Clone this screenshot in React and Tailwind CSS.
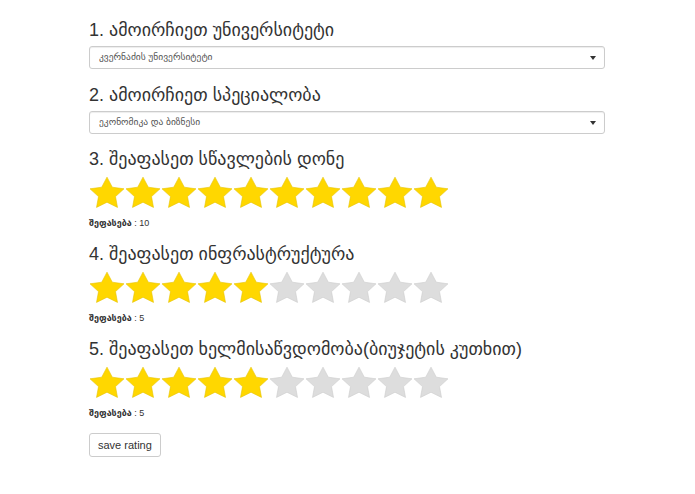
import { useState } from 'react';

const font = { fontFamily: '"Liberation Sans", "DejaVu Sans", sans-serif' };

function Star({ on }) {
  return (
    <svg viewBox="0 0 36 34" preserveAspectRatio="none" className="block w-[36px] h-[32px] shrink-0">
      <polygon
        points="18,1.2 23.3,11.9 35,13.6 26.5,21.9 28.5,33.4 18,27.9 7.5,33.4 9.5,21.9 1,13.6 12.7,11.9"
        fill={on ? '#ffd700' : '#dddddd'}
        stroke={on ? '#e6c300' : '#cccccc'}
        strokeWidth="0.6"
        strokeLinejoin="round"
      />
    </svg>
  );
}

function Rating({ title, value, onChange }) {
  return (
    <div>
      <h4 className="h-[20px] text-[18px] leading-[20px] text-[#333] mt-[15px]">{title}</h4>
      <div className="flex mt-[7px] h-[32px]">
        {Array.from({ length: 10 }).map((_, i) => (
          <button key={i} onClick={() => onChange(i + 1)} className="block cursor-pointer">
            <Star on={i < value} />
          </button>
        ))}
      </div>
      <div className="h-[12px] text-[9px] leading-[12px] text-[#333] mt-[9px]">
        <b>შეფასება</b> : {value}
      </div>
    </div>
  );
}

function Select({ value, options }) {
  return (
    <div className="relative mt-[6px] w-[516px] h-[23px]">
      <select
        defaultValue={value}
        className="block appearance-none w-full h-[23px] border border-[#ccc] rounded-[3px] bg-white text-[9.5px] text-[#555] pl-[9px] pr-6 outline-none shadow-[inset_0_1px_1px_rgba(0,0,0,0.075)]"
        style={font}
      >
        {options.map(o => <option key={o}>{o}</option>)}
      </select>
      <span className="absolute right-[9px] top-[10px] w-0 h-0 border-l-[3px] border-r-[3px] border-t-[4px] border-l-transparent border-r-transparent border-t-[#333]" />
    </div>
  );
}

export default function App() {
  const [r1, setR1] = useState(10);
  const [r2, setR2] = useState(5);
  const [r3, setR3] = useState(5);

  return (
    <div className="min-h-[494px] bg-white" style={font}>
      <div className="pl-[89px] pt-[20px]">
        <h4 className="h-[20px] text-[18px] leading-[20px] text-[#333]">1. ამოირჩიეთ უნივერსიტეტი</h4>
        <Select value="კვერნაძის უნივერსიტეტი" options={['კვერნაძის უნივერსიტეტი']} />

        <h4 className="h-[20px] text-[18px] leading-[20px] text-[#333] mt-[16px]">2. ამოირჩიეთ სპეციალობა</h4>
        <Select value="ეკონომიკა და ბიზნესი" options={['ეკონომიკა და ბიზნესი']} />

        <Rating title="3. შეაფასეთ სწავლების დონე" value={r1} onChange={setR1} />
        <Rating title="4. შეაფასეთ ინფრასტრუქტურა" value={r2} onChange={setR2} />
        <Rating title="5. შეაფასეთ ხელმისაწვდომობა(ბიუჯეტის კუთხით)" value={r3} onChange={setR3} />

        <button className="block mt-[14px] h-[24px] px-[8px] border border-[#ccc] rounded-[3px] bg-white text-[11px] text-[#333] cursor-pointer">
          save rating
        </button>
      </div>
    </div>
  );
}
